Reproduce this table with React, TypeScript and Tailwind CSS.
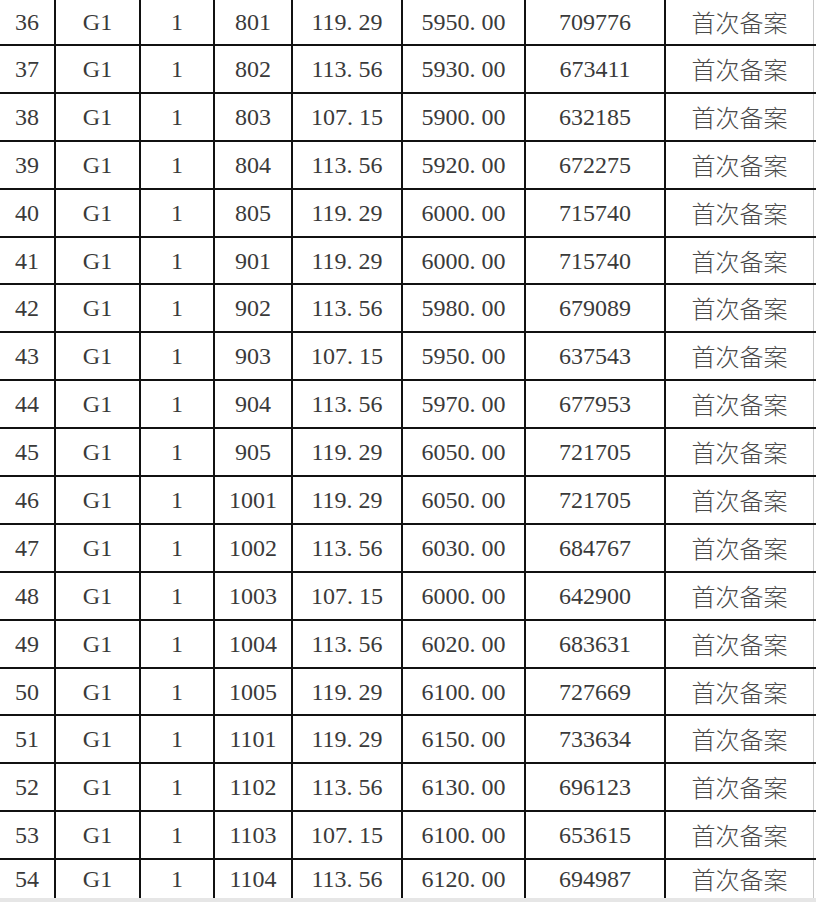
const rows: [string, string, string, string, string][] = [
  ['36', '801', '119.29', '5950.00', '709776'],
  ['37', '802', '113.56', '5930.00', '673411'],
  ['38', '803', '107.15', '5900.00', '632185'],
  ['39', '804', '113.56', '5920.00', '672275'],
  ['40', '805', '119.29', '6000.00', '715740'],
  ['41', '901', '119.29', '6000.00', '715740'],
  ['42', '902', '113.56', '5980.00', '679089'],
  ['43', '903', '107.15', '5950.00', '637543'],
  ['44', '904', '113.56', '5970.00', '677953'],
  ['45', '905', '119.29', '6050.00', '721705'],
  ['46', '1001', '119.29', '6050.00', '721705'],
  ['47', '1002', '113.56', '6030.00', '684767'],
  ['48', '1003', '107.15', '6000.00', '642900'],
  ['49', '1004', '113.56', '6020.00', '683631'],
  ['50', '1005', '119.29', '6100.00', '727669'],
  ['51', '1101', '119.29', '6150.00', '733634'],
  ['52', '1102', '113.56', '6130.00', '696123'],
  ['53', '1103', '107.15', '6100.00', '653615'],
  ['54', '1104', '113.56', '6120.00', '694987'],
];

// half-width period like the original song typeface
function Num({ value }: { value: string }) {
  const [a, b] = value.split('.');
  if (b === undefined) return <>{value}</>;
  return (
    <>
      {a}
      <span className="inline-block w-[12px] text-left">.</span>
      {b}
    </>
  );
}

function Cell({ children, last }: { children: React.ReactNode; last?: boolean }) {
  return (
    <div
      className={
        last
          ? 'flex items-center justify-center border-r border-[#c8c8c8]'
          : 'flex items-center justify-center border-r-2 border-[#111]'
      }
    >
      {children}
    </div>
  );
}

export default function App() {
  return (
    <div className="w-[816px] h-[902px] bg-white overflow-hidden flex flex-col text-[24px] text-[#3a3a3a] font-['Liberation_Serif','DejaVu_Serif',serif]">
      {rows.map((r, i) => {
        const first = i === 0;
        const end = i === rows.length - 1;
        const h = first ? 'h-[46px]' : end ? 'flex-1' : 'h-[47.9px]';
        return (
          <div
            key={r[0]}
            className={`${h} shrink-0 grid grid-cols-[56px_85px_74px_78px_110px_123px_140px_148px] ${
              end ? '' : 'border-b-2 border-[#111]'
            }`}
          >
            <Cell>{r[0]}</Cell>
            <Cell>G1</Cell>
            <Cell>1</Cell>
            <Cell>{r[1]}</Cell>
            <Cell><Num value={r[2]} /></Cell>
            <Cell><Num value={r[3]} /></Cell>
            <Cell>{r[4]}</Cell>
            <Cell last>
              <span className="text-[#4a4a4a] font-light font-['Noto_Sans_CJK_SC',sans-serif]">首次备案</span>
            </Cell>
          </div>
        );
      })}
      <div className="h-[4px] shrink-0 bg-[#e6e6e6]" />
    </div>
  );
}
